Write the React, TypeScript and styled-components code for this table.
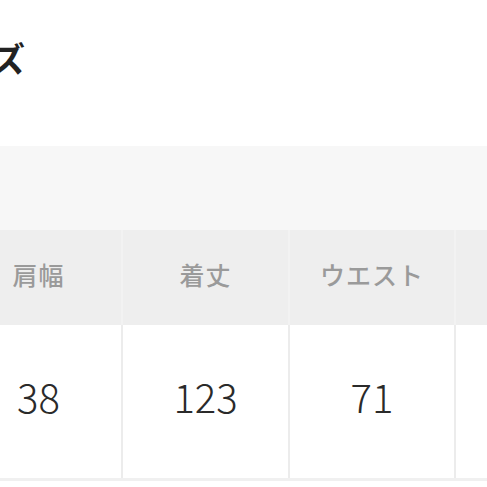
import React from 'react';
import styled, { createGlobalStyle } from 'styled-components';

const GlobalStyle = createGlobalStyle`
  html, body {
    margin: 0;
    padding: 0;
    background: #fff;
  }
  body {
    font-family: "Noto Sans CJK JP", "Noto Sans", sans-serif;
  }
`;

const Page = styled.main`
  width: 487px;
  height: 487px;
  overflow: hidden;
  background: #fff;
`;

const Heading = styled.div`
  height: 146px;
  display: flex;
  align-items: flex-start;
`;

const Title = styled.h2`
  margin: 28px 0 0 -76px;
  font-size: 34px;
  font-weight: 700;
  line-height: 60px;
  color: #222;
  white-space: nowrap;
`;

const Band = styled.div`
  height: 84px;
  background: #f7f7f7;
`;

const SizeTable = styled.div`
  margin-left: -44px;
  width: 700px;
`;

const Row = styled.div<{ $head?: boolean; $height: number }>`
  display: grid;
  grid-template-columns: 167px 167px 166px 200px;
  height: ${(p) => p.$height}px;
  background: ${(p) => (p.$head ? '#eeeeee' : '#fff')};
  border-bottom: ${(p) => (p.$head ? '0' : '3px solid #f0f0f0')};
`;

const Cell = styled.div<{ $head?: boolean }>`
  display: flex;
  align-items: center;
  justify-content: center;
  padding-bottom: ${(p) => (p.$head ? '7px' : '12px')};
  border-right: 2px solid ${(p) => (p.$head ? '#f2f2f2' : '#ececec')};
  color: ${(p) => (p.$head ? '#9a9a9a' : '#2a2a2a')};
  font-size: ${(p) => (p.$head ? '25px' : '40px')};
  font-weight: ${(p) => (p.$head ? 500 : 300)};
  letter-spacing: ${(p) => (p.$head ? '1px' : '0')};
  &:last-child {
    border-right: none;
  }
`;

const BottomEdge = styled.div`
  height: 9px;
  border-bottom: 1px solid #cfcfcf;
  background: #fff;
`;

const heads = ['肩幅', '着丈', 'ウエスト', ''];
const values = ['38', '123', '71', ''];

export default function App() {
  return (
    <Page>
      <GlobalStyle />
      <Heading>
        <Title>サイズ</Title>
      </Heading>
      <Band />
      <SizeTable>
        <Row $head $height={95}>
          {heads.map((h, i) => (
            <Cell $head key={i}>
              {h}
            </Cell>
          ))}
        </Row>
        <Row $height={153}>
          {values.map((v, i) => (
            <Cell key={i}>{v}</Cell>
          ))}
        </Row>
        <BottomEdge />
      </SizeTable>
    </Page>
  );
}
